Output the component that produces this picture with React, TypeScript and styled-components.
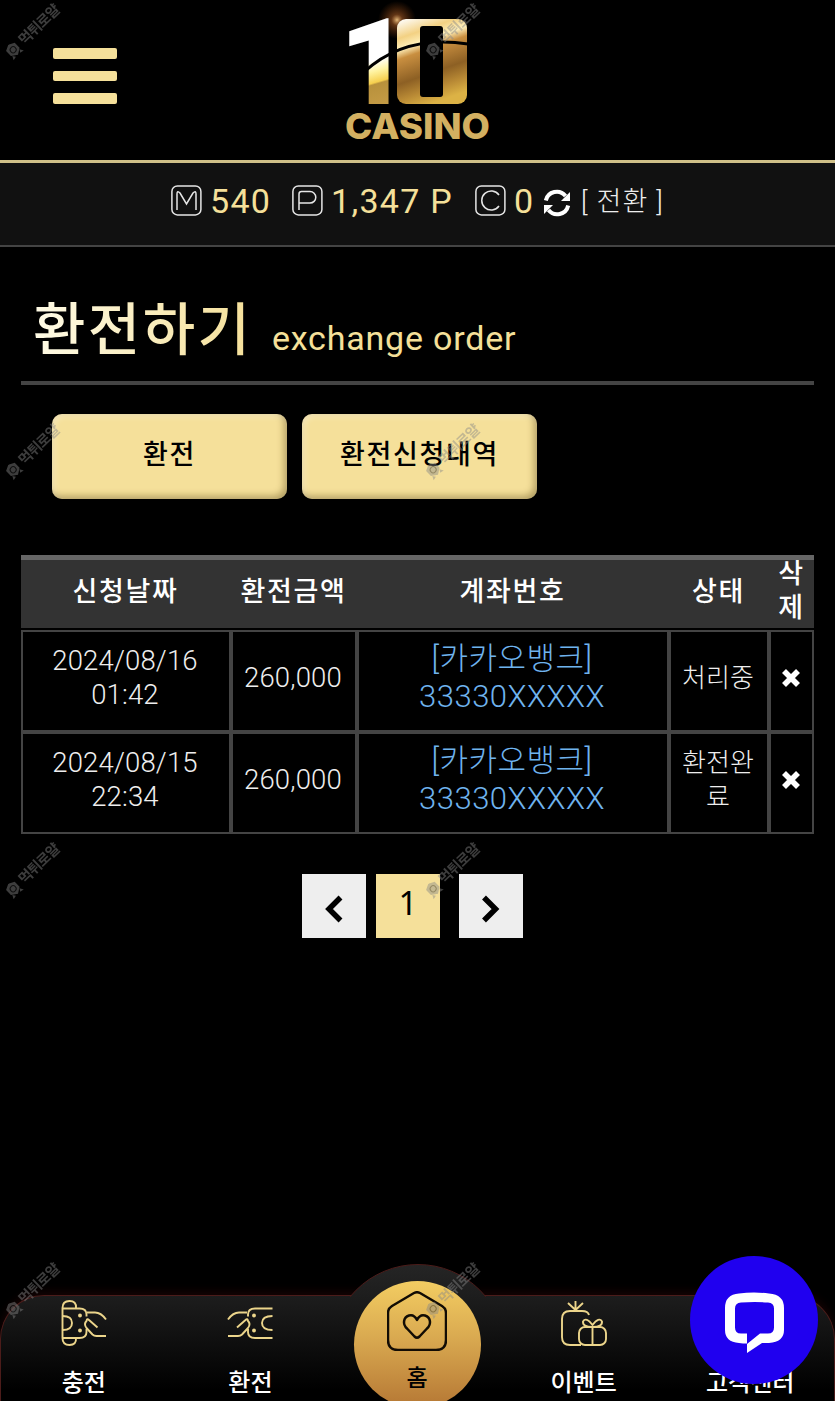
import React from 'react';
import styled, { createGlobalStyle } from 'styled-components';

const GOLD = '#f5e09a';

const GlobalStyle = createGlobalStyle`
  * { box-sizing: border-box; }
  html, body { margin: 0; padding: 0; background: #000; }
  body {
    font-family: Roboto, 'Noto Sans CJK KR', sans-serif;
    color: #fff;
    overflow: hidden;
  }
  button { font: inherit; border: 0; padding: 0; cursor: pointer; }
  svg { display: block; }
`;

const Page = styled.div`
  position: relative;
  display: flex;
  flex-direction: column;
  width: 835px;
  height: 1401px;
  overflow: hidden;
  background: #000;
`;

const Header = styled.header`
  display: grid;
  grid-template-columns: 340px 155px 1fr;
  height: 163px;
  border-bottom: 3px solid #d0c088;
`;

const MenuButton = styled.button`
  display: flex;
  flex-direction: column;
  gap: 12px;
  margin: 48px 0 0 53px;
  width: 64px;
  height: 57px;
  background: none;
`;

const MenuBar = styled.span`
  height: 10.7px;
  border-radius: 2px;
  background: ${GOLD};
`;

const Balance = styled.div`
  display: flex;
  height: 84px;
  padding: 20px 0 0 171px;
  background: #111;
  border-bottom: 2px solid #444;
  line-height: 37px;
`;

const Badge = styled.span`
  display: flex;
  padding-top: 2px;
`;

const Amount = styled.span<{ $gap: number; $width: number }>`
  width: ${(p) => p.$width}px;
  margin-left: ${(p) => p.$gap}px;
  font-size: 34px;
  letter-spacing: 1.3px;
  color: ${GOLD};
  white-space: nowrap;
`;

const SwitchLink = styled.span`
  margin-left: 10px;
  font-size: 27px;
  font-weight: 300;
  letter-spacing: 1.2px;
  line-height: 39px;
  color: #eee;
  white-space: nowrap;
`;

const RefreshWrap = styled.span`
  display: flex;
  padding-top: 6px;
`;

const Title = styled.h1`
  display: flex;
  align-items: baseline;
  gap: 19.5px;
  height: 138px;
  margin: 0 21px;
  padding: 42px 0 0 12px;
  border-bottom: 4px solid #444;
  font-weight: 500;
  color: ${GOLD};
  white-space: nowrap;
`;

const TitleMain = styled.span`
  font-size: 57px;
  line-height: 84px;
  letter-spacing: 2.4px;
  background: linear-gradient(90deg, #fffbe6, ${GOLD});
  background-clip: text;
  -webkit-background-clip: text;
  color: transparent;
`;

const TitleSub = styled.small`
  font-size: 34px;
  font-weight: 400;
  letter-spacing: 0.8px;
`;

const Tabs = styled.div`
  display: flex;
  gap: 15px;
  padding: 29px 0 0 52px;
`;

const Tab = styled.button`
  width: 235px;
  height: 85px;
  padding-bottom: 8px;
  border-radius: 10px;
  background: ${GOLD};
  box-shadow: inset -3px -3px 7px rgba(80, 60, 10, 0.4), inset 2px 2px 6px rgba(255, 255, 255, 0.4);
  color: #000;
  font-size: 27px;
  font-weight: 500;
  letter-spacing: 1.7px;
`;

const Table = styled.div`
  margin: 56px 21px 0;
`;

const Row = styled.div`
  display: grid;
  grid-template-columns: 210px 126px 312px 100px 45px;
`;

const HeadRow = styled(Row)`
  height: 73px;
  margin-bottom: 2px;
  border-top: 5px solid #666;
  background: #333;
`;

const HeadCell = styled.div<{ $tight?: boolean }>`
  display: flex;
  align-items: ${(p) => (p.$tight ? 'flex-start' : 'center')};
  justify-content: center;
  padding-bottom: ${(p) => (p.$tight ? 0 : 5)}px;
  margin-top: ${(p) => (p.$tight ? -3 : 0)}px;
  margin-left: ${(p) => (p.$tight ? 0 : -1)}px;
  font-size: 27px;
  font-weight: 500;
  letter-spacing: 1.7px;
  line-height: 34px;
  text-align: center;
`;

const Cell = styled.div<{ $big?: boolean; $tight?: boolean }>`
  display: flex;
  align-items: center;
  justify-content: center;
  height: 102px;
  padding: 0 2px 6px 0;
  border: 2px solid #444;
  font-size: ${(p) => (p.$big ? 31 : p.$tight ? 26 : 27.5)}px;
  font-weight: 300;
  letter-spacing: ${(p) => (p.$big ? 0.5 : 0.15)}px;
  line-height: ${(p) => (p.$big ? 38 : 34)}px;
  text-align: center;
  white-space: nowrap;
  color: ${(p) => (p.$big ? '#6fb3ee' : '#eee')};
`;

const Pager = styled.div`
  display: flex;
  margin: 40px 0 0 302px;
`;

const PageButton = styled.button<{ $active?: boolean; $gap?: number }>`
  display: flex;
  align-items: center;
  justify-content: center;
  width: 64px;
  height: 64px;
  margin-left: ${(p) => p.$gap || 0}px;
  padding-bottom: ${(p) => (p.$active ? 7 : 0)}px;
  padding-top: ${(p) => (p.$active ? 0 : 6)}px;
  background: ${(p) => (p.$active ? GOLD : '#eee')};
  color: #000;
  font-family: 'Noto Sans', sans-serif;
  font-size: 33px;
`;

const Nav = styled.nav`
  position: absolute;
  left: 0;
  bottom: 0;
  display: grid;
  grid-template-columns: repeat(5, 1fr);
  width: 835px;
  height: 106px;
  border: 1px solid #4c1c1a;
  border-bottom: 0;
  border-radius: 44px 44px 0 0;
  background: linear-gradient(#1d1d1d, #000 90%);
  box-shadow: 0 -3px 10px rgba(120, 20, 20, 0.2);
`;

const NavItem = styled.a`
  display: flex;
  flex-direction: column;
  align-items: center;
  gap: 20px;
  padding: 4px 1px 0 0;
  font-size: 24px;
  font-weight: 500;
  line-height: 34px;
  white-space: nowrap;
`;

const Bump = styled.div`
  position: absolute;
  left: 349px;
  top: -32px;
  display: flex;
  justify-content: center;
  width: 136px;
  height: 33px;
  overflow: hidden;
`;

const BumpDisc = styled.div`
  flex: none;
  width: 176px;
  height: 176px;
  border: 1px solid #4c1c1a;
  border-radius: 50%;
  background: linear-gradient(#252525, #1d1d1d 32px);
`;

const HomeDisc = styled.a`
  position: absolute;
  left: 353px;
  top: -15px;
  display: flex;
  flex-direction: column;
  align-items: center;
  width: 127px;
  height: 127px;
  padding: 10px 1px 0 0;
  border-radius: 50%;
  background: linear-gradient(#f3cd62, #d9a950 45%, #b57734);
  color: #000;
  font-size: 23px;
  font-weight: 500;
  line-height: 34px;
  gap: 11px;
`;

const ChatButton = styled.button`
  position: absolute;
  left: 690px;
  top: 1256px;
  width: 128px;
  height: 128px;
  border-radius: 50%;
  background: #2000ef;
`;

const Watermark = styled.div<{ $x: number; $y: number }>`
  position: absolute;
  left: ${(p) => p.$x}px;
  top: ${(p) => p.$y}px;
  display: flex;
  align-items: center;
  gap: 3px;
  width: 72px;
  height: 20px;
  transform: rotate(-44deg);
  opacity: 0.45;
  color: #888;
  font-size: 14.5px;
  font-weight: 700;
  letter-spacing: -0.9px;
  line-height: 20px;
  white-space: nowrap;
  pointer-events: none;
`;

const Logo = () => (
  <svg width="155" height="150" viewBox="340 0 155 150" overflow="visible">
    <defs>
      <linearGradient id="foil" gradientUnits="userSpaceOnUse" x1="20" y1="-86" x2="45" y2="0">
        <stop offset="0" stopColor="#fff" />
        <stop offset="0.5" stopColor="#fff" />
        <stop offset="0.62" stopColor="#fff3a0" />
        <stop offset="0.74" stopColor="#f6cf4e" />
        <stop offset="0.76" stopColor="#b8913c" />
        <stop offset="1" stopColor="#c49b45" />
      </linearGradient>
      <linearGradient id="foilZero" gradientUnits="userSpaceOnUse" x1="400" y1="19" x2="430" y2="104">
        <stop offset="0" stopColor="#fff" />
        <stop offset="0.2" stopColor="#f3d183" />
        <stop offset="0.32" stopColor="#fff0bb" />
        <stop offset="0.42" stopColor="#c98f40" />
        <stop offset="0.68" stopColor="#8d6024" />
        <stop offset="0.85" stopColor="#b98a35" />
        <stop offset="1" stopColor="#dcb245" />
      </linearGradient>
      <radialGradient id="flare">
        <stop offset="0" stopColor="#ffd08a" stopOpacity="0.9" />
        <stop offset="0.3" stopColor="#c0682a" stopOpacity="0.5" />
        <stop offset="1" stopColor="#a04a10" stopOpacity="0" />
      </radialGradient>
      <clipPath id="zeroClip">
        <rect x="397" y="19" width="70" height="85" rx="9" />
      </clipPath>
    </defs>
    <circle cx="397" cy="20" r="19" fill="url(#flare)" />
    <text transform="translate(339.500 104)" fontFamily="Roboto" fontWeight="900" fontSize="120" fill="url(#foil)">1</text>
    <g clipPath="url(#zeroClip)">
      <text x="397" y="97" fontFamily="Roboto" fontWeight="700" fontSize="100" textLength="70" lengthAdjust="spacingAndGlyphs" fill="url(#foilZero)" stroke="url(#foilZero)" strokeWidth="34">0</text>
    </g>
    <rect x="420" y="26" width="23" height="71" rx="3" fill="#000" />
    <path d="M364 72 Q405 34 468 44" fill="none" stroke="#000" strokeWidth="3" />
    <text x="345" y="138.500" fontFamily="Inter" fontWeight="800" fontSize="36" textLength="145" lengthAdjust="spacingAndGlyphs" fill="#d3b061">CASINO</text>
  </svg>
);

const badgeGlyphs: Record<string, string> = {
  M: 'M6 25V9q0-4 3-1l6.500 11 6.500-11q3-3 3 1V25',
  P: 'M7 25V9q0-2.500 2.500-2.500H18a5.800 5.800 0 0 1 0 11.600H7',
  C: 'M24 10a9.500 9.500 0 1 0 0 11',
};

const CoinBadge = ({ kind }: { kind: string }) => (
  <Badge>
    <svg width="31" height="31" viewBox="0 0 31 31" fill="none" stroke="#e6e6e6" aria-label={kind}>
      <rect x="0.9" y="0.9" width="29" height="29" rx="5.500" strokeWidth="1.500" />
      <path d={badgeGlyphs[kind]} strokeWidth="1.500" />
    </svg>
  </Badge>
);

const RefreshIcon = () => (
  <RefreshWrap>
    <svg width="28" height="28" viewBox="0 0 28 28" fill="none" stroke="#fff" strokeWidth="4">
      <path d="M2.800 11.500A11.200 11.200 0 0 1 22.500 7" />
      <path d="M25.200 16.500A11.200 11.200 0 0 1 5.500 21" />
      <path d="M27 3v9h-9z" fill="#fff" stroke="none" />
      <path d="M1 25v-9h9z" fill="#fff" stroke="none" />
    </svg>
  </RefreshWrap>
);

const CloseIcon = () => (
  <svg width="18" height="18" viewBox="0 0 18 18" stroke="#fff" strokeWidth="5.600" fill="none">
    <path d="M2 2l14 14M16 2l-14 14" />
  </svg>
);

const Chevron = ({ right }: { right?: boolean }) => (
  <svg width="18" height="28" viewBox="0 0 18 28" fill="none" stroke="#000" strokeWidth="5.500">
    <path d={right ? 'M2 2.500L13.500 14 2 25.500' : 'M15.500 2.500L4 14l11.500 11.500'} />
  </svg>
);

const lineProps = { fill: 'none', stroke: '#ecd58b', strokeWidth: 1.9, strokeLinejoin: 'round' as const };

const DepositIcon = () => (
  <svg width="46" height="46" viewBox="0 0 46 46" {...lineProps}>
    <path d="M1.500 8v30M1.500 8q0-7 7-7t6.500 7M1.500 38q0 7 7 7t6.500-7" />
    <path d="M1.500 8.500h17q7 0 7 6v2M25.500 29v3q0 6-7 6h-17M1.500 16q9.500 0 9.500 7t-9.500 7" />
    <circle cx="19" cy="15.500" r="1" fill="#ecd58b" />
    <circle cx="19" cy="30.500" r="1" fill="#ecd58b" />
    <path d="M26 12.500h8q6 0 11 7M36.500 27.500L28 20q-2-2-2.500 1-3 3 0 7l6 6.500q1.500 1.500 4 1.500h9.500" />
  </svg>
);

const WithdrawIcon = () => (
  <svg width="46" height="46" viewBox="0 0 46 46" {...lineProps}>
    <path d="M45.500 8.500H28q-7 0-7 6v2M21 29v3q0 6 7 6h17.500" />
    <path d="M45.500 16q-10.500 0-10.500 7t10.500 7" />
    <circle cx="27" cy="15.500" r="1" fill="#ecd58b" />
    <circle cx="27" cy="30.500" r="1" fill="#ecd58b" />
    <path d="M20 12.500h-8q-6 0-11 7M10 27.500L18.500 20q2-2 2.500 1 3 3 0 7l-6 6.500q-1.500 1.500-4 1.500H1" />
  </svg>
);

const EventIcon = () => (
  <svg width="46" height="46" viewBox="0 0 46 46" {...lineProps}>
    <path d="M20 45H9q-8 0-8-8V19q0-8 8-8h12q6 0 7 4M14.500 11V1M14.500 10L7 3M14.500 10L22 3" />
    <rect x="18" y="27" width="27" height="18" rx="6" />
    <path d="M31.500 45V27q-10 0-9.500-5.500 3-5 9.500 3.500 6.500-8.500 9.500-3.500 .5 5.500-9.500 5.500" />
  </svg>
);

const HomeIcon = () => (
  <svg width="60" height="60" viewBox="0 0 60 60" fill="none" stroke="#120c04" strokeWidth="2.500" strokeLinejoin="round">
    <path d="M27 2q3-1.500 6 0l22 13q4 2.500 4 7v27q0 10-10 10H11Q1 59 1 49V22q0-4.500 4-7z" />
    <path d="M30 29q-3-6-8-4.500c-6 2-6.500 9-2 13l7.500 8q2.500 2.500 5 0l7.500-8c4.500-4 4-11-2-13q-5-1.500-8 4.500z" />
  </svg>
);

const ChatIcon = () => (
  <svg width="128" height="128" viewBox="0 0 128 128">
    <path fill="#fff" fillRule="evenodd" d="M49 37.500q15-2 30 0q15 1 15 14.500v22q0 12-15 13h-7L57 97V87.500q-4 0-8-.5-14-1-14-13V52q0-13.500 14-14.500zM51 46.500q-6 .5-6 6v19q0 6 6 6h6v10.500l13-10.500h8q6 0 6-6V52.500q0-5.500-6-6-13.500-1-27 0z" />
  </svg>
);

const rows = [
  { date: '2024/08/16', time: '01:42', amount: '260,000', status: ['처리중'] },
  { date: '2024/08/15', time: '22:34', amount: '260,000', status: ['환전완', '료'] },
];

const marks = [0, 420, 839, 1259].flatMap((y) => [0, 420].map((x) => ({ x, y })));

export default function App() {
  return (
    <>
      <GlobalStyle />
      <Page>
        <Header>
          <MenuButton aria-label="menu">
            <MenuBar />
            <MenuBar />
            <MenuBar />
          </MenuButton>
          <Logo />
        </Header>
        <Balance>
          <CoinBadge kind="M" />
          <Amount $gap={8} $width={82}>540</Amount>
          <CoinBadge kind="P" />
          <Amount $gap={8} $width={144}>1,347 P</Amount>
          <CoinBadge kind="C" />
          <Amount $gap={8} $width={29}>0</Amount>
          <RefreshIcon />
          <SwitchLink>[ 전환 ]</SwitchLink>
        </Balance>
        <Title>
          <TitleMain>환전하기</TitleMain>
          <TitleSub>exchange order</TitleSub>
        </Title>
        <Tabs>
          <Tab>환전</Tab>
          <Tab>환전신청내역</Tab>
        </Tabs>
        <Table>
          <HeadRow>
            <HeadCell>신청날짜</HeadCell>
            <HeadCell>환전금액</HeadCell>
            <HeadCell>계좌번호</HeadCell>
            <HeadCell>상태</HeadCell>
            <HeadCell $tight>삭<br />제</HeadCell>
          </HeadRow>
          {rows.map((r) => (
            <Row key={r.date}>
              <Cell>{r.date}<br />{r.time}</Cell>
              <Cell>{r.amount}</Cell>
              <Cell $big>[카카오뱅크]<br />33330XXXXX</Cell>
              <Cell $tight>{r.status[0]}{r.status[1] && <><br />{r.status[1]}</>}</Cell>
              <Cell><CloseIcon /></Cell>
            </Row>
          ))}
        </Table>
        <Pager>
          <PageButton aria-label="previous"><Chevron /></PageButton>
          <PageButton $active $gap={10}>1</PageButton>
          <PageButton $gap={19} aria-label="next"><Chevron right /></PageButton>
        </Pager>
        <Nav>
          <NavItem><DepositIcon />충전</NavItem>
          <NavItem><WithdrawIcon />환전</NavItem>
          <span />
          <NavItem><EventIcon />이벤트</NavItem>
          <NavItem><svg width="46" height="46" />고객센터</NavItem>
          <Bump><BumpDisc /></Bump>
          <HomeDisc><HomeIcon />홈</HomeDisc>
        </Nav>
        <ChatButton aria-label="chat"><ChatIcon /></ChatButton>
        {marks.map((m) => (
          <Watermark key={`${m.x}-${m.y}`} $x={m.x - 2} $y={m.y + 21}>
            <svg width="16" height="16" viewBox="0 0 16 16">
              <path fill="#888" d="M8 0l6 3v7l-6 4-6-4V3zM3 11l-2 4 4-1zM13 11l2 4-4-1z" />
              <circle cx="8" cy="7" r="3" fill="none" stroke="#222" />
            </svg>
            먹튀로얄
          </Watermark>
        ))}
      </Page>
    </>
  );
}
